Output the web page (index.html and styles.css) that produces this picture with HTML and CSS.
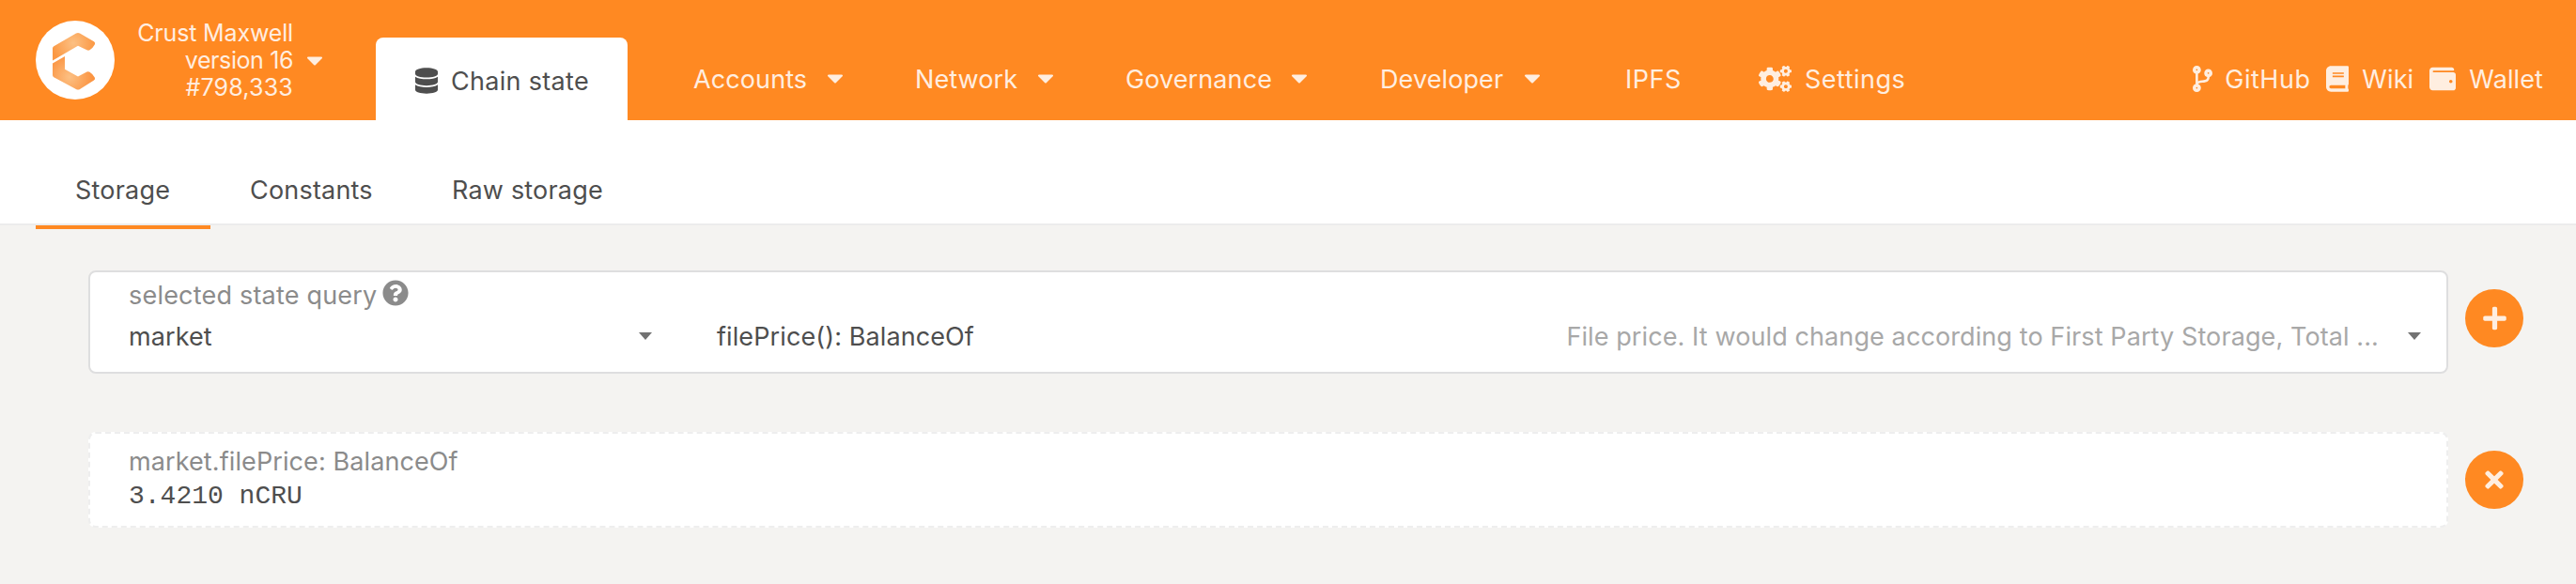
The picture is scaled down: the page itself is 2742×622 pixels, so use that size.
FILE: index.html
```
<!DOCTYPE html>
<html lang="en">
<head>
<meta charset="utf-8">
<title>Chain state</title>
<link rel="stylesheet" href="styles.css">
</head>
<body>
<svg class="defs" aria-hidden="true">
  <symbol id="caret" viewBox="12 192 296 169"><path d="M31.3 192h257.3c17.8 0 26.7 21.5 14.1 34.1L174.1 354.8c-7.8 7.8-20.5 7.8-28.3 0L17.2 226.1C4.6 213.5 13.5 192 31.3 192z"/></symbol>
  <symbol id="cog-small" viewBox="0 0 640 512"><path d="M512.1 191l-8.2 14.3c-3 5.3-9.4 7.5-15.1 5.4-11.8-4.4-22.6-10.7-32.1-18.6-4.6-3.8-5.8-10.5-2.8-15.7l8.2-14.3c-6.9-8-12.3-17.3-15.9-27.4h-16.5c-6 0-11.2-4.3-12.2-10.3-2-12-2.1-24.6 0-37.1 1-6 6.2-10.4 12.2-10.4h16.5c3.6-10.1 9-19.4 15.9-27.4l-8.2-14.3c-3-5.2-1.9-11.9 2.8-15.7 9.5-7.9 20.4-14.2 32.1-18.6 5.7-2.1 12.1.1 15.1 5.4l8.2 14.3c10.5-1.9 21.2-1.9 31.7 0L552 6.3c3-5.3 9.4-7.5 15.1-5.4 11.8 4.4 22.6 10.7 32.1 18.6 4.6 3.8 5.8 10.5 2.8 15.7l-8.2 14.3c6.9 8 12.3 17.3 15.9 27.4h16.5c6 0 11.2 4.3 12.2 10.3 2 12 2.1 24.6 0 37.1-1 6-6.2 10.4-12.2 10.4h-16.5c-3.6 10.1-9 19.4-15.9 27.4l8.2 14.3c3 5.2 1.9 11.9-2.8 15.7-9.5 7.9-20.4 14.2-32.1 18.6-5.7 2.1-12.1-.1-15.1-5.4l-8.2-14.3c-10.4 1.9-21.2 1.9-31.7 0zm-10.5-58.8c38.5 29.6 82.4-14.3 52.8-52.8-38.5-29.7-82.4 14.3-52.8 52.8z"/></symbol>
</svg>

<header class="topbar">
  <div class="brand">
    <svg class="logo" viewBox="0 0 84 84">
      <defs>
        <radialGradient id="g1" gradientUnits="userSpaceOnUse" cx="40" cy="24" r="23"><stop offset="0" stop-color="#fcc083"/><stop offset="1" stop-color="#fb9843"/></radialGradient>
        <radialGradient id="g2" gradientUnits="userSpaceOnUse" cx="36" cy="60" r="25"><stop offset="0" stop-color="#fcc083"/><stop offset="1" stop-color="#fb9340"/></radialGradient>
      </defs>
      <circle cx="42" cy="42" r="42" fill="#fff"/>
      <path fill="url(#g1)" d="M18 29.5Q18 28 19.3 27.2L43 13.5Q45 12.4 47 13.5L62 22.2Q64 23.5 62.8 25.4Q60.5 29.5 57.5 31.3Q56 32.2 54.5 31.3L45 26.8L18 42.6Z"/>
      <path fill="url(#g2)" d="M18 45.5L31 38V51.7L45 59.4L54.5 54.5Q56 53.8 57.5 54.7Q60.5 56.5 62.8 60.5Q63.8 62.3 62 63.5L47 73Q45 74.2 43 73L19.3 60.3Q18 59.5 18 58Z"/>
    </svg>
    <div class="chain"><div class="name">Crust Maxwell</div><div class="version">version 16</div><div class="block">#798,333</div></div>
    <svg class="caret"><use href="#caret"/></svg>
  </div>
  <nav class="menu">
    <a class="tab-active"><svg class="i-db" viewBox="0 0 448 512"><path d="M448 73.143v45.714C448 159.143 347.667 192 224 192S0 159.143 0 118.857V73.143C0 32.857 100.333 0 224 0s224 32.857 224 73.143zM448 176v102.857C448 319.143 347.667 352 224 352S0 319.143 0 278.857V176c48.125 33.143 136.208 48.572 224 48.572S399.874 209.143 448 176zm0 160v102.857C448 479.143 347.667 512 224 512S0 479.143 0 438.857V336c48.125 33.143 136.208 48.572 224 48.572S399.874 369.143 448 336z"/></svg><span>Chain state</span></a>
    <a class="item accounts"><span>Accounts</span><svg class="caret"><use href="#caret"/></svg></a>
    <a class="item network"><span>Network</span><svg class="caret"><use href="#caret"/></svg></a>
    <a class="item governance"><span>Governance</span><svg class="caret"><use href="#caret"/></svg></a>
    <a class="item developer"><span>Developer</span><svg class="caret"><use href="#caret"/></svg></a>
    <a class="item ipfs"><span>IPFS</span></a>
    <a class="item settings"><svg class="i-cogs" viewBox="0 0 640 512"><path d="M386.3 286.1l33.7 16.8c10.1 5.8 14.5 18.1 10.5 29.1-8.9 24.2-26.4 46.4-42.6 65.8-7.4 8.9-20.2 11.1-30.3 5.3l-29.1-16.8c-16 13.7-34.6 24.6-54.9 31.7v33.6c0 11.6-8.3 21.6-19.7 23.6-24.6 4.2-50.4 4.4-75.9 0-11.5-2-20-11.9-20-23.6V418c-20.3-7.2-38.9-18-54.9-31.7L74 403c-10 5.8-22.9 3.6-30.3-5.3-16.2-19.4-33.3-41.6-42.2-65.7-4-10.9.4-23.2 10.5-29.1l33.3-16.8c-3.9-20.9-3.9-42.4 0-63.4L12 205.8c-10.1-5.8-14.6-18.1-10.5-29 8.9-24.2 26-46.4 42.2-65.8 7.4-8.9 20.2-11.1 30.3-5.3l29.1 16.8c16-13.7 34.6-24.6 54.9-31.7V57.1c0-11.5 8.2-21.5 19.6-23.5 24.6-4.2 50.5-4.4 76-.1 11.5 2 20 11.9 20 23.6v33.6c20.3 7.2 38.9 18 54.9 31.7l29.1-16.8c10-5.8 22.9-3.6 30.3 5.3 16.2 19.4 33.2 41.6 42.1 65.8 4 10.9.1 23.2-10 29.1l-33.7 16.8c3.9 21 3.9 42.5 0 63.5zm-117.6 21.1c59.2-77-28.7-164.9-105.7-105.7-59.2 77 28.7 164.9 105.7 105.7z"/><use href="#cog-small" width="640" height="512"/><use href="#cog-small" y="299" width="640" height="512"/></svg><span>Settings</span></a>
  </nav>
  <div class="links">
    <a class="item"><svg class="i-branch" viewBox="0 0 384 512"><path d="M384 144c0-44.2-35.8-80-80-80s-80 35.8-80 80c0 36.4 24.3 67.1 57.5 76.8-.6 16.1-4.2 28.5-11 36.9-15.4 19.2-49.3 22.4-85.2 25.7-28.2 2.6-57.4 5.4-81.3 16.9v-144c32.5-10.2 56-40.5 56-76.3 0-44.2-35.8-80-80-80S0 35.8 0 80c0 35.8 23.5 66.1 56 76.3v199.3C23.5 365.9 0 396.2 0 432c0 44.2 35.8 80 80 80s80-35.8 80-80c0-34-21.2-63.1-51.2-74.6 3.1-5.2 7.8-9.8 14.9-13.4 16.2-8.2 40.4-10.4 66.1-12.8 42.2-3.9 90-8.4 118.2-43.4 14-17.4 21.1-39.8 21.6-67.9 31.6-10.8 54.4-40.7 54.4-75.9zM80 64c8.8 0 16 7.2 16 16s-7.2 16-16 16-16-7.2-16-16 7.2-16 16-16zm0 384c-8.8 0-16-7.2-16-16s7.2-16 16-16 16 7.2 16 16-7.2 16-16 16zm224-320c8.8 0 16 7.2 16 16s-7.2 16-16 16-16-7.2-16-16 7.2-16 16-16z"/></svg><span class="github">GitHub</span></a>
    <a class="item"><svg class="i-book" viewBox="0 0 448 512"><path d="M448 360V24c0-13.3-10.7-24-24-24H96C43 0 0 43 0 96v320c0 53 43 96 96 96h328c13.3 0 24-10.7 24-24v-16c0-7.5-3.5-14.3-8.9-18.7-4.2-15.4-4.2-59.3 0-74.7 5.4-4.3 8.9-11.1 8.9-18.6zM128 134c0-3.3 2.7-6 6-6h212c3.3 0 6 2.7 6 6v20c0 3.3-2.7 6-6 6H134c-3.3 0-6-2.7-6-6v-20zm0 64c0-3.3 2.7-6 6-6h212c3.3 0 6 2.7 6 6v20c0 3.3-2.7 6-6 6H134c-3.3 0-6-2.7-6-6v-20zm253.4 250H96c-17.7 0-32-14.3-32-32 0-17.6 14.4-32 32-32h285.4c-1.9 17.1-1.9 46.9 0 64z"/></svg><span class="wiki">Wiki</span></a>
    <a class="item"><svg class="i-wallet" viewBox="0 0 512 512"><path d="M461.2 128H80c-8.84 0-16-7.16-16-16s7.16-16 16-16h384c8.84 0 16-7.16 16-16 0-26.51-21.49-48-48-48H64C28.65 32 0 60.65 0 96v320c0 35.35 28.65 64 64 64h397.2c28.02 0 50.8-21.53 50.8-48V176c0-26.47-22.78-48-50.8-48zM416 336c-17.67 0-32-14.33-32-32s14.33-32 32-32 32 14.33 32 32-14.33 32-32 32z"/></svg><span>Wallet</span></a>
  </div>
</header>

<nav class="subnav">
  <a class="sub current">Storage</a>
  <a class="sub constants">Constants</a>
  <a class="sub raw">Raw storage</a>
</nav>

<main class="content">
  <div class="row">
    <section class="box query">
      <div class="label">selected state query<svg class="i-help" viewBox="0 0 512 512"><path d="M504 256c0 136.997-111.043 248-248 248S8 392.997 8 256C8 119.083 119.043 8 256 8s248 111.083 248 248zM262.655 90c-54.497 0-89.255 22.957-116.549 63.758-3.536 5.286-2.353 12.415 2.715 16.258l34.699 26.31c5.205 3.947 12.621 3.008 16.665-2.122 17.864-22.658 30.113-35.797 57.303-35.797 20.429 0 45.698 13.148 45.698 32.958 0 14.976-12.363 22.667-32.534 33.976C247.128 238.528 216 254.941 216 296v4c0 6.627 5.373 12 12 12h56c6.627 0 12-5.373 12-12v-1.333c0-28.462 83.186-29.647 83.186-106.667 0-58.002-60.165-102-116.531-102zM256 338c-25.365 0-46 20.635-46 46 0 25.364 20.635 46 46 46s46-20.636 46-46c0-25.365-20.635-46-46-46z"/></svg></div>
      <div class="selects">
        <div class="select module"><span>market</span><i class="arrow"></i></div>
        <div class="select method"><span>filePrice(): BalanceOf</span><span class="doc">File price. It would change according to First Party Storage, Total ...</span><i class="arrow"></i></div>
      </div>
    </section>
    <button class="round"><svg class="i-plus" viewBox="0 0 448 512"><path d="M416 208H272V64c0-17.67-14.33-32-32-32h-32c-17.67 0-32 14.33-32 32v144H32c-17.67 0-32 14.33-32 32v32c0 17.67 14.33 32 32 32h144v144c0 17.67 14.33 32 32 32h32c17.67 0 32-14.33 32-32V304h144c17.67 0 32-14.33 32-32v-32c0-17.67-14.33-32-32-32z"/></svg></button>
  </div>
  <div class="row">
    <section class="box result">
      <div class="label">market.filePrice: BalanceOf</div>
      <div class="value">3.4210 nCRU</div>
    </section>
    <button class="round"><svg class="i-times" viewBox="0 0 352 512"><path d="M242.72 256l100.07-100.07c12.28-12.28 12.28-32.19 0-44.48l-22.24-22.24c-12.28-12.28-32.19-12.28-44.48 0L176 189.28 75.93 89.21c-12.28-12.28-32.19-12.28-44.48 0L9.21 111.45c-12.28 12.28-12.28 32.19 0 44.48L109.28 256 9.21 356.07c-12.28 12.28-12.28 32.19 0 44.48l22.24 22.24c12.28 12.28 32.2 12.28 44.48 0L176 322.72l100.07 100.07c12.28 12.28 32.2 12.28 44.48 0l22.24-22.24c12.28-12.28 12.28-32.19 0-44.48L242.72 256z"/></svg></button>
  </div>
</main>
</body>
</html>
```
FILE: styles.css
```
* { box-sizing: border-box; }

body {
  margin: 0;
  min-height: 622px;
  background: #f4f3f1;
  color: #4e4e4e;
  font: 27px/40px Inter, sans-serif;
  letter-spacing: 0.1px;
}

svg { display: block; flex: none; fill: currentColor; }
.defs { display: none; }

.topbar {
  display: flex;
  height: 128px;
  background: #ff8922;
  color: #ffeee0;
}

.brand {
  display: flex;
  width: 400px;
  padding: 22px 0 0 38px;
}
.logo { width: 84px; height: 84px; }
.chain {
  width: 190px;
  margin-top: -1px;
  font-size: 25px;
  line-height: 29px;
  text-align: right;
}
.name { letter-spacing: -0.15px; }
.version { letter-spacing: -0.4px; }
.block { letter-spacing: 0.2px; }
.caret { width: 16px; height: 10px; }
.brand .caret { margin: 38px 0 0 15px; }

.menu { display: flex; flex: 1; }
.tab-active {
  display: flex;
  width: 268px;
  height: 88px;
  margin-top: 40px;
  padding: 26px 0 0 42px;
  border-radius: 8px 8px 0 0;
  background: #fff;
  color: #4e4e4e;
  letter-spacing: 0.3px;
}
.i-db { width: 24px; height: 28px; margin: 6px 14px 0 0; }
.tab-active span { padding-top: 1px; }

.item {
  display: flex;
  align-items: center;
  justify-content: space-between;
  height: 40px;
  margin-top: 64px;
}
.item span { padding-top: 2px; }
.accounts { width: 159px; margin-left: 70px; }
.network { width: 147px; margin-left: 77px; }
.governance { width: 193px; margin-left: 77px; }
.developer { width: 170px; margin-left: 78px; }
.ipfs { width: 60px; margin-left: 91px; letter-spacing: 0.5px; }
.settings { margin-left: 82px; letter-spacing: 0.5px; }
.i-cogs { width: 35px; height: 28px; margin-right: 14px; }

.links { display: flex; padding-right: 35px; }
.i-branch { width: 21px; height: 28px; margin-right: 13px; }
.i-book { width: 24px; height: 28px; margin-right: 14px; }
.i-wallet { width: 28px; height: 28px; margin-right: 14px; }
.github { width: 108px; letter-spacing: 0.5px; }
.wiki { width: 72px; }

.subnav {
  display: flex;
  height: 112px;
  padding-left: 38px;
  border-bottom: 2px solid #ececec;
  background: #fff;
}
.sub { height: 116px; padding: 55px 0 0 42px; letter-spacing: 0.2px; }
.current { width: 186px; border-bottom: 4px solid #ff8922; }
.constants { width: 215px; }

.content { padding: 48px 56px 0 94px; }
.row { display: flex; gap: 18px; margin-bottom: 62px; }
.box { width: 2512px; border-radius: 8px; background: #fff; }
.query { height: 110px; padding: 3px 27px 0 41px; border: 2px solid #dededf; }
.result { height: 102px; padding: 10px 41px; border: 2px dashed #eeeeee; }
.label { display: flex; height: 44px; color: #8b8b8b; }
.query .label { height: 46px; padding-top: 2px; letter-spacing: 0.2px; }
.i-help { width: 28px; height: 28px; margin: 3px 0 0 6px; }
.selects { display: flex; justify-content: space-between; }
.select { display: flex; align-items: center; }
.module { width: 557px; justify-content: space-between; }
.method { width: 1814px; }
.doc { margin-left: auto; padding-right: 31px; color: #a8a8a8; }
.arrow {
  width: 14px;
  height: 8px;
  margin-top: -2px;
  background: #727272;
  clip-path: polygon(0 0, 100% 0, 50% 100%);
}
.value {
  margin-top: -3px;
  font: 28px/32px "Liberation Mono", monospace;
  letter-spacing: 0;
}

.round {
  display: flex;
  align-items: center;
  justify-content: center;
  width: 62px;
  height: 62px;
  margin-top: 20px;
  padding: 0;
  border: 0;
  border-radius: 50%;
  background: #ff8922;
  color: #ffeee0;
}
.i-plus { width: 25px; height: 28px; }
.i-times { width: 20px; height: 28px; }
```
